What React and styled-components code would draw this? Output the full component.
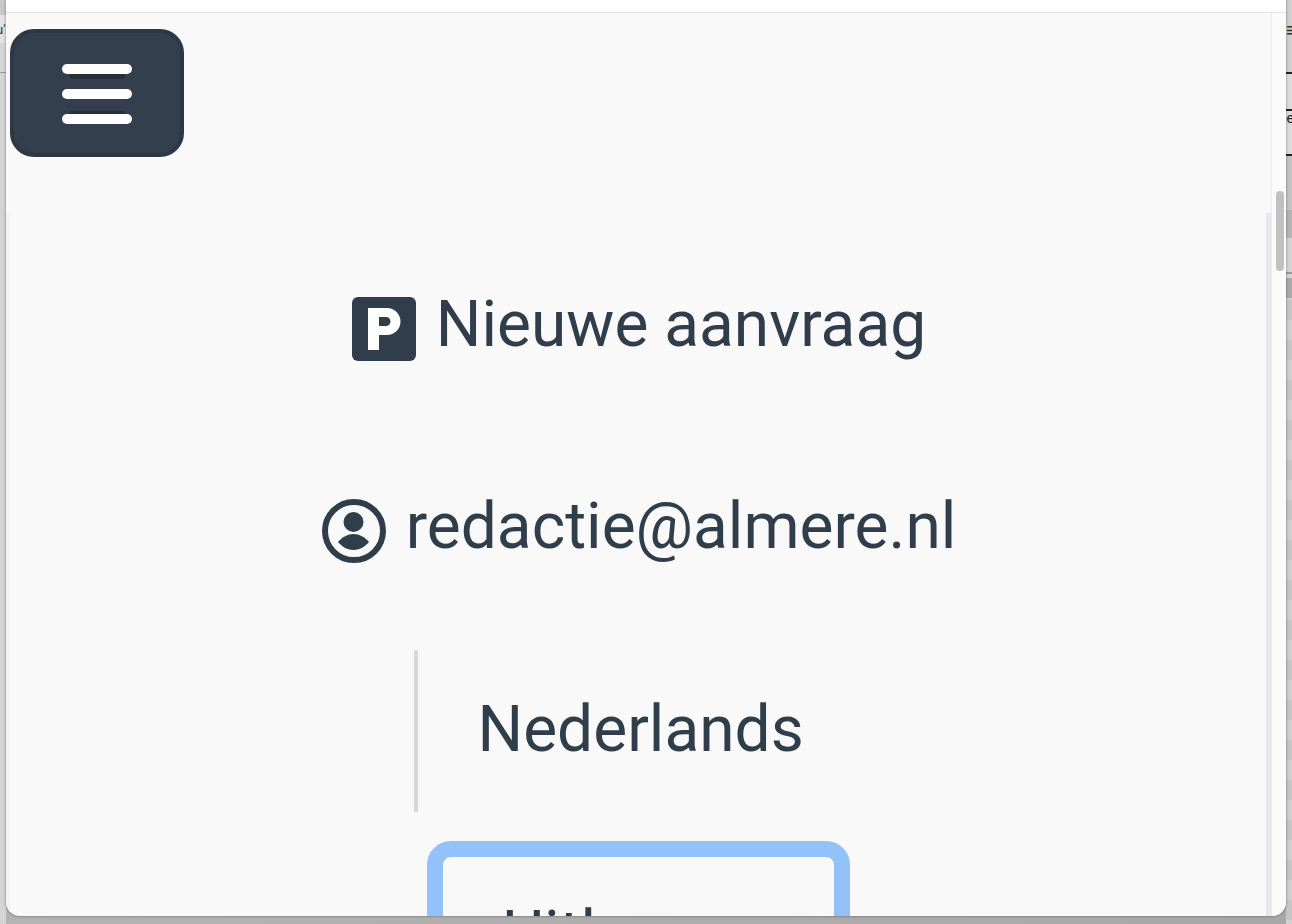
import React from 'react';
import styled, { createGlobalStyle } from 'styled-components';

const GlobalStyle = createGlobalStyle`
  html, body {
    margin: 0;
    padding: 0;
    background: #c9c9c9;
    font-family: Roboto, "Liberation Sans", sans-serif;
  }
`;

const ParkingIcon = () => (
  <svg width='64' height='64' viewBox='0 0 64 64'>
    <rect width='64' height='64' rx='6' fill='#303d4b' />
    <path
      fillRule='evenodd'
      fill='#ffffff'
      d='M16 11H35A13.5 13.5 0 0 1 35 38H27V53H16ZM27 20V29H34A4.5 4.5 0 0 0 34 20Z'
    />
  </svg>
);

const UserIcon = () => (
  <svg width='64' height='64' viewBox='0 0 64 64' fill='#303d4b'>
    <circle cx='32' cy='32' r='29' fill='none' stroke='#303d4b' strokeWidth='6' />
    <circle cx='31.5' cy='23' r='10' />
    <path d='M16 43C20 38 26 35 31.5 35C37 35 43 38 47 43C43 48 37 51 31.5 51C26 51 20 48 16 43Z' />
  </svg>
);

export default function App() {
  return (
    <Backdrop>
      <GlobalStyle />
      <LeftSnippet>u'</LeftSnippet>
      <RightGlyph>≡</RightGlyph>
      <RightSnippet>ee</RightSnippet>
      <Window>
        <TopBar />
        <WindowBody>
          <Main>
            <Header>
              <MenuButton aria-label='Menu'>
                <Bar $shadow='below' />
                <Bar />
                <Bar $shadow='above' />
              </MenuButton>
            </Header>
            <Panel>
              <MenuRow>
                <ParkingIcon />
                <Label $lift={10}>Nieuwe aanvraag</Label>
              </MenuRow>
              <MenuRow>
                <UserIcon />
                <Label $lift={10}>redactie@almere.nl</Label>
              </MenuRow>
              <LanguageSelect>
                <Label $lift={4}>Nederlands</Label>
              </LanguageSelect>
              <LogoutButton>Uitloggen</LogoutButton>
            </Panel>
          </Main>
          <ScrollGutter>
            <ScrollThumb />
          </ScrollGutter>
        </WindowBody>
      </Window>
    </Backdrop>
  );
}

const Backdrop = styled.div`
  position: relative;
  box-sizing: border-box;
  width: 1292px;
  height: 924px;
  padding: 0 6px 8px;
  overflow: hidden;
  background:
    linear-gradient(#c9c9c9 0 15px, #e2e2e2 15px 43px, #d6d6d6 43px 72px, #999 72px 73px, #d4d4d4 73px) left top / 6px 100% no-repeat,
    linear-gradient(#d0d0d0 0 72px, #222 72px 74px, #dcdcdc 74px 109px, #222 109px 111px, #dcdcdc 111px 154px, #222 154px 156px, #c4c4c4 156px 210px, #b5b5b5 210px 238px, #d4d4d4 238px 272px, #9a9a9a 272px 274px, #d4d4d4 274px 278px, #aaaaaa 278px 298px, transparent 298px) right top / 6px 100% no-repeat,
    repeating-linear-gradient(#d0d0d0 0 20px, #c6c6c6 20px 40px) right top / 6px 100% no-repeat,
    linear-gradient(90deg, #b4b4b4, #a8a8a8);
`;

const LeftSnippet = styled.span`
  position: absolute;
  left: -4px;
  top: 22px;
  font-size: 13px;
  color: #333;
`;

const RightGlyph = styled.span`
  position: absolute;
  left: 1286px;
  top: 18px;
  font-size: 20px;
  font-weight: 700;
  color: #333;
`;

const RightSnippet = styled.span`
  position: absolute;
  left: 1279px;
  top: 110px;
  font-size: 14px;
  color: #222;
`;

const Window = styled.div`
  position: relative;
  display: flex;
  flex-direction: column;
  height: 916px;
  overflow: hidden;
  background: #f9f9f9;
  border-radius: 0 0 14px 14px;
  box-shadow: 0 0 3px rgba(0, 0, 0, 0.45);
`;

const TopBar = styled.div`
  flex: none;
  height: 12px;
  background: #ffffff;
  border-bottom: 1px solid #e2e2e2;
`;

const WindowBody = styled.div`
  display: flex;
  flex: 1;
  min-height: 0;
`;

const Main = styled.div`
  flex: 1;
  min-width: 0;
  overflow: hidden;
`;

const Header = styled.div`
  box-sizing: border-box;
  height: 200px;
  padding: 16px 0 0 4px;
`;

const MenuButton = styled.button`
  display: flex;
  flex-direction: column;
  align-items: center;
  justify-content: center;
  gap: 15px;
  box-sizing: border-box;
  width: 174px;
  height: 128px;
  padding: 2px 0 0;
  background: #343f4d;
  border: 4px solid #2d3745;
  border-radius: 24px;
`;

const Bar = styled.span`
  position: relative;
  display: block;
  width: 70px;
  height: 10px;
  background: #ffffff;
  border-radius: 5px;

  &::before {
    content: ${(props) => (props.$shadow ? "''" : 'none')};
    position: absolute;
    left: 7px;
    right: 7px;
    height: 5px;
    background: #282f38;
    border-radius: 0 0 4px 4px;
    ${(props) => (props.$shadow === 'below' ? 'top: 10px;' : 'top: -3px; height: 3px; border-radius: 4px 4px 0 0;')}
  }
`;

const Panel = styled.div`
  display: flex;
  flex-direction: column;
  align-items: center;
  gap: 40px;
  box-sizing: border-box;
  height: 800px;
  padding-top: 35px;
  border-left: 4px solid #f3f3f5;
  border-right: 5px solid #e8e8ec;
  color: #303d4b;
`;

const MenuRow = styled.div`
  display: flex;
  flex: none;
  align-items: center;
  gap: 20px;
  height: 162px;
  margin-left: 2px;
`;

const Label = styled.span`
  font-size: 64px;
  line-height: 75px;
  margin-bottom: ${(props) => props.$lift}px;
`;

const LanguageSelect = styled.div`
  display: flex;
  flex: none;
  align-items: center;
  box-sizing: border-box;
  width: 449px;
  height: 162px;
  margin-top: -2px;
  padding-left: 60px;
  border-left: 4px solid #d5d5da;
`;

const LogoutButton = styled.button`
  flex: none;
  box-sizing: border-box;
  width: 423px;
  height: 183px;
  margin-top: -11px;
  padding: 40px 0 36px;
  background: transparent;
  border: 16px solid #93c1f9;
  border-radius: 24px;
  color: #303d4b;
  font-family: inherit;
  font-size: 64px;
  line-height: 75px;
  text-align: center;
`;

const ScrollGutter = styled.div`
  display: flex;
  flex: none;
  justify-content: center;
  box-sizing: border-box;
  width: 15px;
  padding: 178px 0 0 2px;
  background: #fbfbfb;
  border-left: 1px solid #ececec;
`;

const ScrollThumb = styled.div`
  width: 8px;
  height: 80px;
  background: #c1c1c1;
  border-radius: 4px;
`;
